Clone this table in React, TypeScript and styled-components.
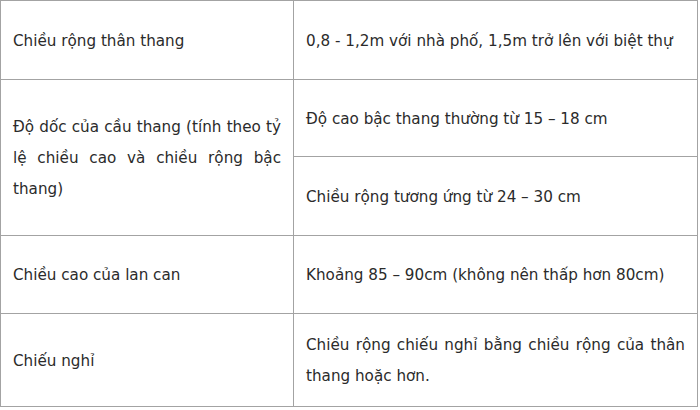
import React from "react";
import styled, { createGlobalStyle } from "styled-components";

const GlobalStyle = createGlobalStyle`
  html, body {
    margin: 0;
    padding: 0;
    background: #ffffff;
  }
`;

const Table = styled.div`
  display: grid;
  grid-template-columns: 292px 403px;
  grid-template-rows: 78px 76px 78px 77px 92px;
  gap: 1px;
  padding: 1px;
  width: fit-content;
  background: #a3a3a3;
  font-family: "DejaVu Sans", sans-serif;
  font-size: 15.2px;
  line-height: 31px;
  color: #2b2b2b;
`;

const Cell = styled.div<{ $span?: number }>`
  background: #ffffff;
  display: flex;
  align-items: center;
  padding: 2px 12px 0 12px;
  grid-row: ${(p) => (p.$span ? `span ${p.$span}` : "auto")};
`;

const Text = styled.p`
  margin: 0;
  width: 100%;
  text-align: justify;
`;

export default function App() {
  return (
    <>
      <GlobalStyle />
      <Table>
        <Cell>
          <Text>Chiều rộng thân thang</Text>
        </Cell>
        <Cell>
          <Text>0,8 - 1,2m với nhà phố, 1,5m trở lên với biệt thự</Text>
        </Cell>
        <Cell $span={2}>
          <Text>
            Độ dốc của cầu thang (tính theo tỷ lệ chiều cao và chiều rộng bậc
            thang)
          </Text>
        </Cell>
        <Cell>
          <Text>Độ cao bậc thang thường từ 15 – 18 cm</Text>
        </Cell>
        <Cell>
          <Text>Chiều rộng tương ứng từ 24 – 30 cm</Text>
        </Cell>
        <Cell>
          <Text>Chiều cao của lan can</Text>
        </Cell>
        <Cell>
          <Text>Khoảng 85 – 90cm (không nên thấp hơn 80cm)</Text>
        </Cell>
        <Cell>
          <Text>Chiếu nghỉ</Text>
        </Cell>
        <Cell>
          <Text>Chiều rộng chiếu nghỉ bằng chiều rộng của thân thang hoặc hơn.</Text>
        </Cell>
      </Table>
    </>
  );
}
